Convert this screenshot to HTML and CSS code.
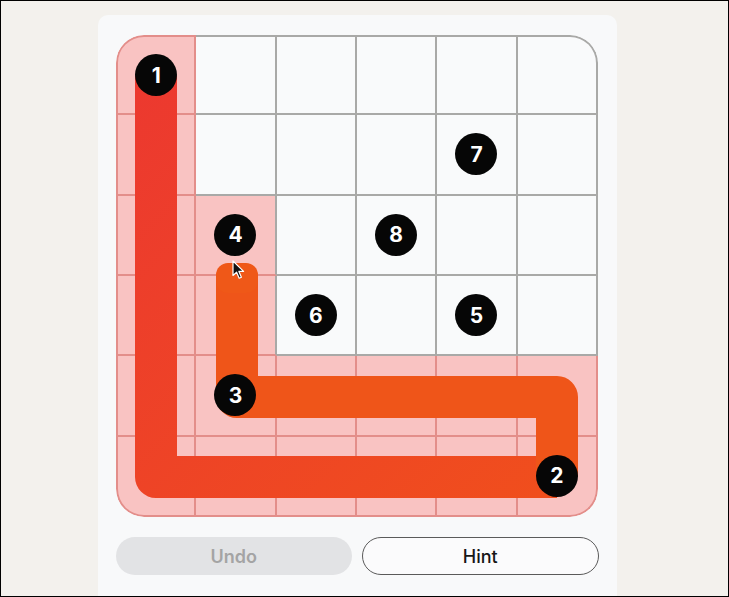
FILE: index.html
```html
<!DOCTYPE html>
<html lang="en">
<head>
  <meta charset="UTF-8">
  <meta name="viewport" content="width=device-width, initial-scale=1.0">
  <title>Zip Puzzle</title>
  <link rel="stylesheet" href="styles.css">
</head>
<body>
  <div class="screen">
    <div class="card">
      <div class="board">
        <!-- row 0 -->
        <div class="cell p first-col first-row tl"><span class="dot">1</span></div>
        <div class="cell first-row"></div>
        <div class="cell first-row"></div>
        <div class="cell first-row"></div>
        <div class="cell first-row"></div>
        <div class="cell first-row tr"></div>
        <!-- row 1 -->
        <div class="cell p first-col"></div>
        <div class="cell"></div>
        <div class="cell"></div>
        <div class="cell"></div>
        <div class="cell"><span class="dot">7</span></div>
        <div class="cell"></div>
        <!-- row 2 -->
        <div class="cell p first-col"></div>
        <div class="cell p gr"><span class="dot">4</span></div>
        <div class="cell"></div>
        <div class="cell"><span class="dot">8</span></div>
        <div class="cell"></div>
        <div class="cell"></div>
        <!-- row 3 -->
        <div class="cell p first-col"></div>
        <div class="cell p gr"></div>
        <div class="cell"><span class="dot">6</span></div>
        <div class="cell"></div>
        <div class="cell"><span class="dot">5</span></div>
        <div class="cell"></div>
        <!-- row 4 -->
        <div class="cell p first-col"></div>
        <div class="cell p"><span class="dot">3</span></div>
        <div class="cell p"></div>
        <div class="cell p"></div>
        <div class="cell p"></div>
        <div class="cell p"></div>
        <!-- row 5 -->
        <div class="cell p first-col bl"></div>
        <div class="cell p"></div>
        <div class="cell p"></div>
        <div class="cell p"></div>
        <div class="cell p"></div>
        <div class="cell p br"><span class="dot">2</span></div>

        <svg class="trail" viewBox="0 0 482 482" width="482" height="482">
          <defs>
            <linearGradient id="trail-red" gradientUnits="userSpaceOnUse" x1="40" y1="41" x2="441" y2="442">
              <stop offset="0" stop-color="#ec392f"/>
              <stop offset="1" stop-color="#f04e1d"/>
            </linearGradient>
          </defs>
          <path d="M40 41 L40 442 L441 442" fill="none" stroke="url(#trail-red)" stroke-width="42" stroke-linejoin="round"/>
          <path d="M441 442 L441 362 L121 362 L121 245" fill="none" stroke="#ef5519" stroke-width="42" stroke-linejoin="round"/>
          <rect x="100" y="228" width="42" height="30" rx="12" fill="#ef5818"/>
        </svg>

        <svg class="pointer" viewBox="0 0 13 20" width="13" height="20">
          <path d="M1 1 L1 15.5 L4.6 12.2 L7.2 18.2 L9.4 17.2 L6.9 11.4 L11.6 11.4 Z" fill="#111" stroke="#fff" stroke-width="1.2" stroke-linejoin="round"/>
        </svg>
      </div>

      <div class="actions">
        <button class="btn btn-undo" disabled>Undo</button>
        <button class="btn btn-hint">Hint</button>
      </div>
    </div>
  </div>
</body>
</html>
```

FILE: styles.css
```css
html, body {
  margin: 0;
  padding: 0;
}
body {
  font-family: Inter, 'Noto Sans', 'Liberation Sans', sans-serif;
  background-color: #f3f1ed;
  color: #1a1a1a;
}
.screen {
  box-sizing: border-box;
  width: 729px;
  height: 597px;
  border: 1px solid #000;
  overflow: hidden;
  padding-top: 14px;
  padding-left: 97px;
}
.card {
  width: 483px;
  height: 620px;
  padding: 20px 18px 0 18px;
  background-color: #f8f9fa;
  border-radius: 10px;
}
.board {
  position: relative;
  width: 482px;
  height: 482px;
  display: grid;
  grid-template-columns: repeat(6, 1fr);
  grid-template-rows: repeat(6, 1fr);
  border-radius: 28px;
  overflow: hidden;
}
.cell {
  box-sizing: border-box;
  background-color: #f9fafb;
  border-right: 2px solid #a9a9a7;
  border-bottom: 2px solid #a9a9a7;
  display: flex;
  align-items: center;
  justify-content: center;
}
.cell.first-col {
  border-left: 2px solid #a9a9a7;
}
.cell.first-row {
  border-top: 2px solid #a9a9a7;
}
.cell.p {
  background-color: #f9c3c2;
  border-color: #e38e8a;
}
.cell.p.gr {
  border-right-color: #a9a9a7;
}
.cell.tl { border-top-left-radius: 28px; }
.cell.tr { border-top-right-radius: 28px; }
.cell.bl { border-bottom-left-radius: 28px; }
.cell.br { border-bottom-right-radius: 28px; }

.dot {
  position: relative;
  z-index: 2;
  width: 42px;
  height: 42px;
  border-radius: 50%;
  background-color: #060606;
  color: #fff;
  font-size: 21px;
  font-weight: 700;
  display: flex;
  align-items: center;
  justify-content: center;
}
.trail {
  position: absolute;
  left: 0;
  top: 0;
  z-index: 1;
}
.pointer {
  position: absolute;
  left: 116px;
  top: 225px;
  z-index: 3;
}

.actions {
  display: flex;
  gap: 10px;
  margin-top: 20px;
}
.btn {
  flex: 1;
  height: 38px;
  border-radius: 19px;
  font-family: Inter, 'Noto Sans', 'Liberation Sans', sans-serif;
  font-size: 18px;
}
.btn-undo {
  background-color: #e2e3e5;
  border: none;
  color: #a4a4a4;
  font-weight: 600;
}
.btn-hint {
  background-color: #fbfbfc;
  border: 1px solid #5a5a5a;
  color: #161616;
  font-weight: 500;
}
```
